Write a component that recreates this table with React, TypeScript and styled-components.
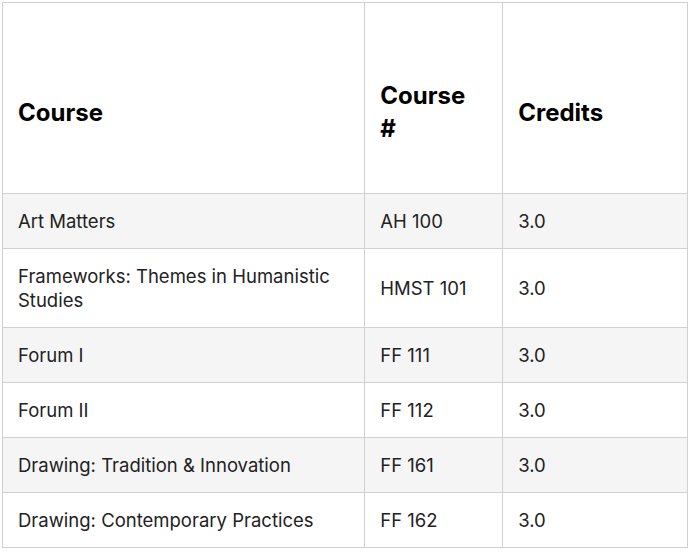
import styled, { createGlobalStyle } from "styled-components"

const GlobalStyle = createGlobalStyle`
    body {
        margin: 0;
        padding: 2px;
        background: #ffffff;
        font-family: Inter, "Liberation Sans", sans-serif;
    }
`

const Table = styled.table`
    border-collapse: collapse;
    width: 686px;
    color: #222222;
`

const HeadCell = styled.th<{ width: number }>`
    width: ${p => p.width}px;
    height: 191px;
    box-sizing: border-box;
    border: 1px solid #d0d0d0;
    padding: 28px 20px 0 15px;
    text-align: left;
    vertical-align: middle;
    font-size: 24px;
    line-height: 33px;
    font-weight: 700;
    color: #000000;
`

const Row = styled.tr<{ shaded: boolean }>`
    background: ${p => (p.shaded ? "#f5f5f5" : "#ffffff")};
`

const Cell = styled.td`
    border: 1px solid #d0d0d0;
    padding: 15px 15px;
    font-size: 18.5px;
    line-height: 24px;
    vertical-align: middle;
`

interface ICourse {
    name: string;
    code: string;
    credits: string;
}

const courses: ICourse[] = [
    { name: "Art Matters", code: "AH 100", credits: "3.0" },
    { name: "Frameworks: Themes in Humanistic Studies", code: "HMST 101", credits: "3.0" },
    { name: "Forum I", code: "FF 111", credits: "3.0" },
    { name: "Forum II", code: "FF 112", credits: "3.0" },
    { name: "Drawing: Tradition & Innovation", code: "FF 161", credits: "3.0" },
    { name: "Drawing: Contemporary Practices", code: "FF 162", credits: "3.0" },
]

const App = () => {
    return (
        <>
            <GlobalStyle />
            <Table>
                <thead>
                    <tr>
                        <HeadCell width={363}>Course</HeadCell>
                        <HeadCell width={138}>Course #</HeadCell>
                        <HeadCell width={185}>Credits</HeadCell>
                    </tr>
                </thead>
                <tbody>
                    {courses.map((course, index) => (
                        <Row shaded={index % 2 === 0} key={course.code}>
                            <Cell>{course.name}</Cell>
                            <Cell>{course.code}</Cell>
                            <Cell>{course.credits}</Cell>
                        </Row>
                    ))}
                </tbody>
            </Table>
        </>
    )
}

export default App
